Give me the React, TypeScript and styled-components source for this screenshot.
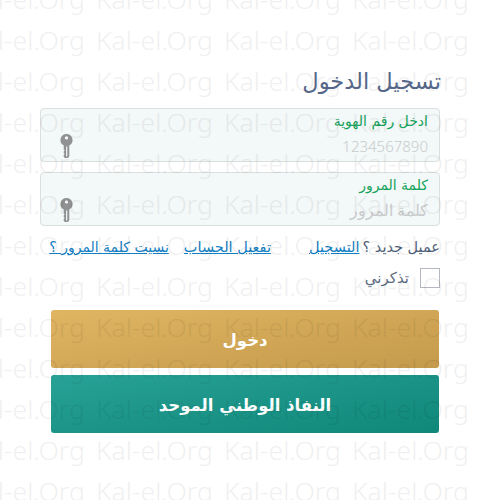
import styled, { createGlobalStyle } from 'styled-components'

const marks = Array.from({ length: 5 * 13 }, (_, i) => i)

const KeyIcon = () => (
  <KeySvg viewBox="0 0 12 24" aria-hidden="true">
    <path
      fillRule="evenodd"
      fill="#8f9192"
      d="M6 0a6 6 0 0 1 2.8 11.3V22.5L7.4 24H4.4L3.2 22.8V21L4.2 20 3.2 19V17.6L4.2 16.6 3.2 15.6V11.3A6 6 0 0 1 6 0ZM6 2.2A1.7 1.7 0 1 0 6 5.6 1.7 1.7 0 0 0 6 2.2ZM5.6 12.4V22.4H6.8V12.4Z"
    />
  </KeySvg>
)

export default function App() {
  return (
    <Page dir="rtl">
      <GlobalStyle />
      <Form>
        <Title>تسجيل الدخول</Title>

        <Fields>
          <Field>
            <FieldLabel>ادخل رقم الهوية</FieldLabel>
            <FieldValue>1234567890</FieldValue>
            <KeyIcon />
          </Field>
          <Field>
            <FieldLabel>كلمة المرور</FieldLabel>
            <FieldValue $arabic>كلمة المرور</FieldValue>
            <KeyIcon />
          </Field>
        </Fields>

        <LinksRow>
          <span>عميل جديد ؟</span>
          <TextLink href="#" $gap={3}>التسجيل</TextLink>
          <TextLink href="#" $gap={38}>تفعيل الحساب</TextLink>
          <TextLink href="#" $gap={15} $small>نسيت كلمة المرور ؟</TextLink>
        </LinksRow>

        <Remember>
          <CheckBox />
          <span>تذكرني</span>
        </Remember>

        <Actions>
          <ActionButton $tone="gold">دخول</ActionButton>
          <ActionButton $tone="teal">النفاذ الوطني الموحد</ActionButton>
        </Actions>
      </Form>

      <Watermark dir="ltr" aria-hidden="true">
        {marks.map((i) => (
          <Mark key={i}>Kal-el.Org</Mark>
        ))}
      </Watermark>
    </Page>
  )
}

const GlobalStyle = createGlobalStyle`
  html, body {
    margin: 0;
    background: #fff;
  }

  body {
    font-family: "DejaVu Sans", "Noto Sans", sans-serif;
  }
`

const Page = styled.div`
  position: relative;
  width: 480px;
  height: 500px;
  overflow: hidden;
`

const Form = styled.form`
  display: flex;
  flex-direction: column;
  padding: 64px 39px 0 40px;
`

const Title = styled.h1`
  margin: 0;
  height: 44px;
  font-size: 22.5px;
  line-height: 34px;
  font-weight: 400;
  color: #56688a;
`

const Fields = styled.div`
  display: flex;
  flex-direction: column;
  gap: 10px;
  margin-right: 1px;
`

const Field = styled.div`
  position: relative;
  box-sizing: border-box;
  height: 54px;
  padding: 3px 11px 0;
  background: #f3f8f8;
  border: 1px solid #dcdfdf;
  border-radius: 4px;
`

const FieldLabel = styled.div`
  font-size: 14px;
  line-height: 19px;
  color: #16a35c;
`

const FieldValue = styled.div<{ $arabic?: boolean }>`
  margin-top: 5px;
  font-family: "Noto Sans", "DejaVu Sans", sans-serif;
  font-size: ${({ $arabic }) => ($arabic ? 16 : 15)}px;
  font-weight: 300;
  line-height: 20px;
  color: #c8cbcc;
`

const KeySvg = styled.svg`
  position: absolute;
  left: 19px;
  top: 25px;
  width: 13px;
  height: 24px;
`

const LinksRow = styled.div`
  display: flex;
  align-items: center;
  height: 20px;
  margin: 11px 1px 0 0;
  font-size: 14.5px;
  line-height: 20px;
  color: #4f5f7a;
`

const TextLink = styled.a<{ $gap: number; $small?: boolean }>`
  color: #1380c4;
  font-size: ${({ $small }) => ($small ? 14 : 14.5)}px;
  text-decoration: underline;
  margin-right: ${({ $gap }) => $gap}px;
`

const Remember = styled.label`
  display: flex;
  align-items: center;
  gap: 11px;
  margin: 11px 1px 0 0;
  height: 20px;
  font-size: 15px;
  color: #5b6a80;
`

const CheckBox = styled.span`
  box-sizing: border-box;
  width: 20px;
  height: 20px;
  border: 1px solid #b4b8bf;
  background: #fff;
`

const Actions = styled.div`
  display: flex;
  flex-direction: column;
  gap: 7px;
  margin: 22px 2px 0 11px;
`

const ActionButton = styled.button<{ $tone: 'gold' | 'teal' }>`
  height: 58px;
  padding: 2px 0 0;
  border: 0;
  border-radius: 3px;
  color: #fff;
  font-family: inherit;
  font-size: 16.5px;
  font-weight: 700;
  background: ${({ $tone }) =>
    $tone === 'gold'
      ? 'linear-gradient(170deg, #e0b562, #c49a4c)'
      : 'linear-gradient(170deg, #28a296, #0f8779)'};
`

const Watermark = styled.div`
  position: absolute;
  inset: 0;
  display: grid;
  grid-template-columns: repeat(5, 128px);
  grid-auto-rows: 41px;
  justify-content: start;
  margin: -21px 0 0 -23px;
  width: 640px;
  opacity: 0.055;
  pointer-events: none;
`

const Mark = styled.span`
  font-family: "Noto Sans", sans-serif;
  font-size: 26.5px;
  font-weight: 300;
  line-height: 41px;
  color: #000;
  white-space: nowrap;
`
